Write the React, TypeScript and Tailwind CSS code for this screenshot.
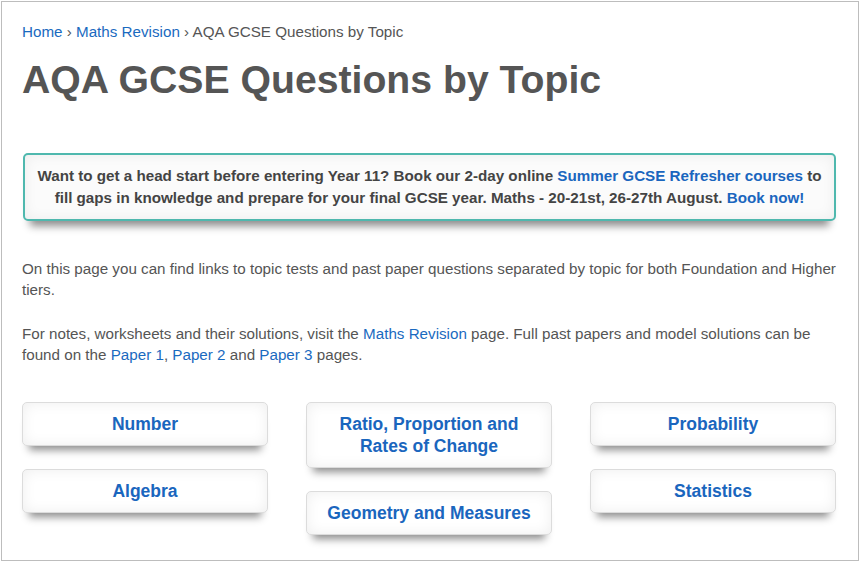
const topicColumns = [
  ['Number', 'Algebra'],
  ['Ratio, Proportion and Rates of Change', 'Geometry and Measures'],
  ['Probability', 'Statistics'],
];

function TopicButton({ label }: { label: string }) {
  return (
    <a
      href="#"
      className="block rounded-[5px] border border-[#dcdcdc] bg-white px-4 py-[10px] text-center text-[17.5px] font-bold leading-[22px] text-[#1a66be] shadow-[inset_0_0_14px_rgba(0,0,0,0.07),0_11px_8px_-7px_rgba(0,0,0,0.45)]"
    >
      {label}
    </a>
  );
}

export default function App() {
  return (
    <div className="h-[562px] w-[860px] bg-white p-[1px] font-['Liberation_Sans',Arial,sans-serif]">
      <div className="h-full border border-[#bdbdbd] pl-[20px] pr-[22px]">
        <nav className="pt-[21px] text-[15.2px] leading-[18px] text-[#555]">
          <a href="#" className="text-[#1a6ac0]">Home</a>
          <span> › </span>
          <a href="#" className="text-[#1a6ac0]">Maths Revision</a>
          <span> › AQA GCSE Questions by Topic</span>
        </nav>

        <h1 className="mt-[16px] text-[39.2px] font-bold leading-[46px] text-[#555]">
          AQA GCSE Questions by Topic
        </h1>

        <div className="mt-[50px] ml-[1px] rounded-[5px] border-2 border-[#4fb8ae] bg-[#fbfbfb] px-3 py-[10px] text-center text-[15.2px] font-bold leading-[22px] text-[#444] shadow-[inset_0_0_14px_rgba(0,0,0,0.06),0_12px_8px_-7px_rgba(0,0,0,0.45)]">
          Want to get a head start before entering Year 11? Book our 2-day online{' '}
          <a href="#" className="text-[#1a66be]">Summer GCSE Refresher courses</a> to fill gaps in
          knowledge and prepare for your final GCSE year. Maths - 20-21st, 26-27th August.{' '}
          <a href="#" className="text-[#1a66be]">Book now!</a>
        </div>

        <p className="mt-[37px] text-[15.2px] leading-[21px] text-[#555]">
          On this page you can find links to topic tests and past paper questions separated by topic for
          both Foundation and Higher tiers.
        </p>

        <p className="mt-[23px] text-[15.2px] leading-[21px] text-[#555]">
          For notes, worksheets and their solutions, visit the{' '}
          <a href="#" className="text-[#1a6ac0]">Maths Revision</a> page. Full past papers and model
          solutions can be found on the <a href="#" className="text-[#1a6ac0]">Paper 1</a>,{' '}
          <a href="#" className="text-[#1a6ac0]">Paper 2</a> and{' '}
          <a href="#" className="text-[#1a6ac0]">Paper 3</a> pages.
        </p>

        <div className="mt-[37px] grid grid-cols-3 gap-x-[38px]">
          {topicColumns.map((col, i) => (
            <div key={i} className="flex flex-col gap-[23px]">
              {col.map((t) => (
                <TopicButton key={t} label={t} />
              ))}
            </div>
          ))}
        </div>
      </div>
    </div>
  );
}
